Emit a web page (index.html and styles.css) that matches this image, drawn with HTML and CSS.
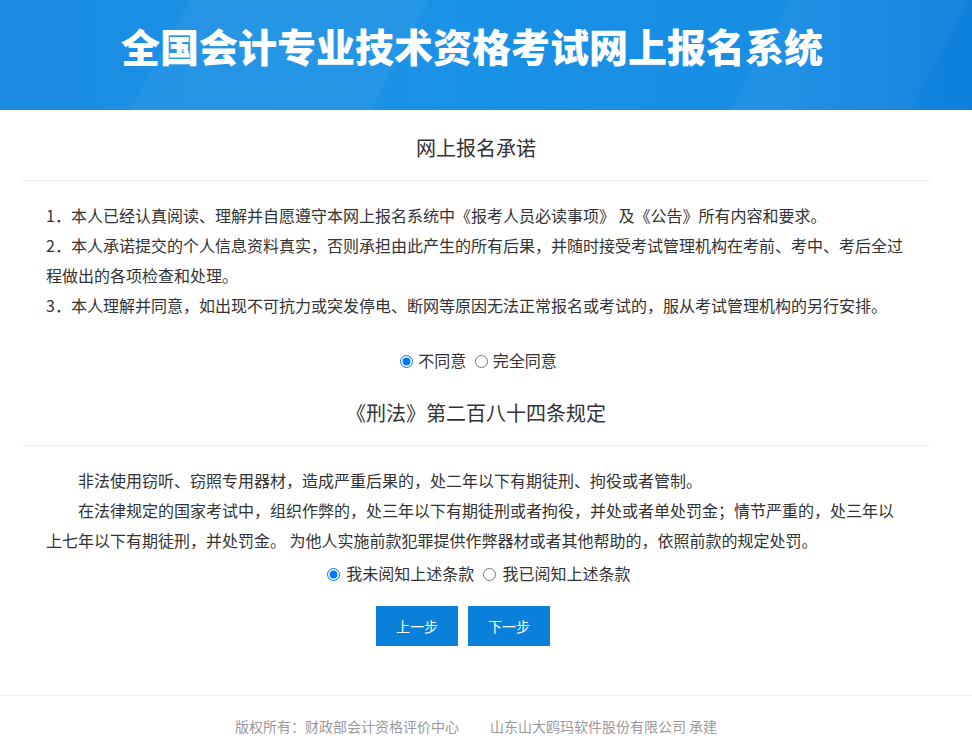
FILE: index.html
```html
<!DOCTYPE html>
<html lang="zh-CN">
<head>
    <meta charset="UTF-8">
    <title>全国会计专业技术资格考试网上报名系统</title>
    <link rel="stylesheet" href="styles.css">
</head>
<body>
    <div class="header">
        <h1>全国会计专业技术资格考试网上报名系统</h1>
    </div>

    <div class="main">
        <h3 class="sec-title">网上报名承诺</h3>
        <div class="terms">
            <p>1．本人已经认真阅读、理解并自愿遵守本网上报名系统中《报考人员必读事项》 及《公告》所有内容和要求。</p>
            <p>2．本人承诺提交的个人信息资料真实，否则承担由此产生的所有后果，并随时接受考试管理机构在考前、考中、考后全过程做出的各项检查和处理。</p>
            <p>3．本人理解并同意，如出现不可抗力或突发停电、断网等原因无法正常报名或考试的，服从考试管理机构的另行安排。</p>
        </div>
        <div class="choice choice-tight">
            <label><input type="radio" name="agree" checked>不同意</label>
            <label><input type="radio" name="agree">完全同意</label>
        </div>

        <h3 class="sec-title">《刑法》第二百八十四条规定</h3>
        <div class="terms law">
            <p>非法使用窃听、窃照专用器材，造成严重后果的，处二年以下有期徒刑、拘役或者管制。</p>
            <p>在法律规定的国家考试中，组织作弊的，处三年以下有期徒刑或者拘役，并处或者单处罚金；情节严重的，处三年以上七年以下有期徒刑，并处罚金。 为他人实施前款犯罪提供作弊器材或者其他帮助的，依照前款的规定处罚。</p>
        </div>
        <div class="choice choice-law">
            <label><input type="radio" name="read" checked> 我未阅知上述条款</label>
            <label><input type="radio" name="read"> 我已阅知上述条款</label>
        </div>

        <div class="btns">
            <button class="btn">上一步</button>
            <button class="btn">下一步</button>
        </div>
    </div>

    <div class="footer">
        <p>版权所有：财政部会计资格评价中心<span>山东山大鸥玛软件股份有限公司 承建</span></p>
    </div>
</body>
</html>
```

FILE: styles.css
```css
* {
    box-sizing: border-box;
}

body {
    margin: 0;
    padding: 0;
    background-color: #fff;
    color: #333;
    font-family: "Microsoft YaHei", "Noto Sans CJK SC", sans-serif;
    font-size: 16px;
}

/* top banner */
.header {
    position: relative;
    height: 110px;
    overflow: hidden;
    background: linear-gradient(90deg, #1b8de3 0%, #1a92e6 45%, #178de4 80%, #0d80dc 100%);
}

.header::before,
.header::after {
    content: "";
    position: absolute;
    top: 0;
    height: 110px;
    transform: skewX(-28deg);
}

.header::before {
    left: 160px;
    width: 240px;
    background: rgba(255, 255, 255, 0.05);
}

.header::after {
    left: 760px;
    width: 180px;
    background: rgba(255, 255, 255, 0.04);
}

.header h1 {
    position: relative;
    z-index: 1;
    width: 908px;
    margin: 0 0 0 22px;
    padding: 20px 8px 0 0;
    line-height: 50px;
    font-size: 39px;
    font-weight: 900;
    color: #fff;
    text-align: center;
}

/* content */
.main {
    width: 908px;
    margin-left: 22px;
}

.sec-title {
    margin: 0;
    padding: 23px 0 17px;
    line-height: 30px;
    font-size: 20px;
    font-weight: normal;
    color: #333;
    text-align: center;
    border-bottom: 1px solid #eee;
}

.terms {
    padding: 19px 24px 0 24px;
}

.terms p {
    margin: 0;
    line-height: 30px;
}

.law p {
    text-indent: 2em;
}

.choice {
    line-height: 30px;
    text-align: center;
}

.choice input {
    vertical-align: -1px;
}

.choice-tight {
    margin-top: 25px;
}

.choice-tight input {
    margin: 0 5px 0 5px;
}

.choice-law {
    margin-top: 3px;
}

.choice-law input {
    margin: 0 3px 0 5px;
}

.btns {
    margin-top: 18px;
    padding-right: 26px;
    display: flex;
    justify-content: center;
    gap: 10px;
}

.btn {
    width: 82px;
    height: 40px;
    border: none;
    background-color: #0b80db;
    color: #fff;
    font-family: inherit;
    font-size: 14px;
    cursor: pointer;
}

.btn:hover {
    background-color: #0970c2;
}

/* bottom */
.footer {
    margin-top: 49px;
    border-top: 1px solid #eee;
}

.footer p {
    width: 908px;
    margin: 0 0 0 22px;
    line-height: 60px;
    font-size: 14px;
    color: #999;
    text-align: center;
}

.footer span {
    margin-left: 31px;
}
```
